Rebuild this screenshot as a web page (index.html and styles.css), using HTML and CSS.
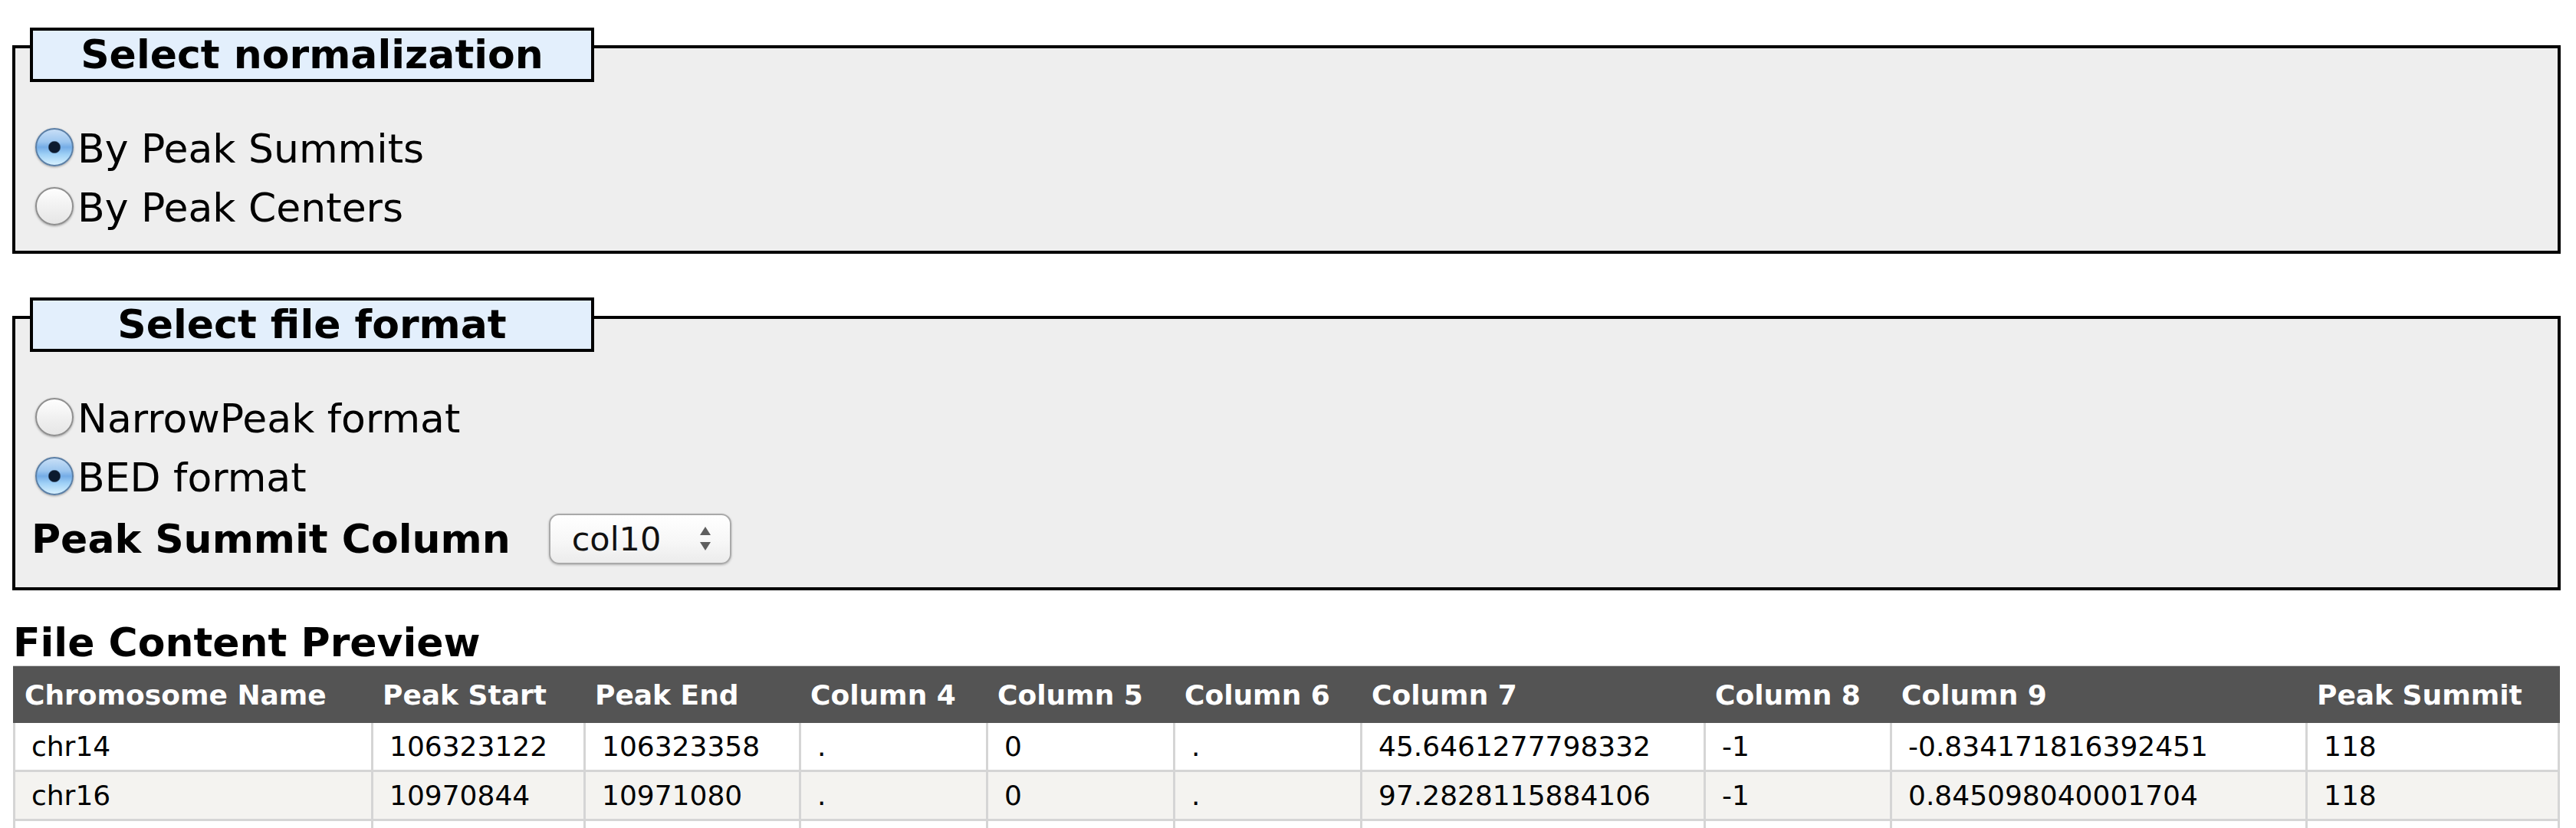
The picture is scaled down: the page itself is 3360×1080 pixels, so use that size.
FILE: index.html
```html
<!DOCTYPE html>
<html lang="en">
<head>
<meta charset="utf-8">
<title>Peak file options</title>
<link rel="stylesheet" href="styles.css">
</head>
<body>
<div class="page">
  <section class="group group-norm">
    <div class="group-title">Select normalization</div>
    <div class="options">
      <label class="option"><input class="radio" type="radio" name="norm" checked><span>By Peak Summits</span></label>
      <label class="option"><input class="radio" type="radio" name="norm"><span>By Peak Centers</span></label>
    </div>
  </section>

  <section class="group group-format">
    <div class="group-title">Select file format</div>
    <div class="options">
      <label class="option"><input class="radio" type="radio" name="fmt"><span>NarrowPeak format</span></label>
      <label class="option"><input class="radio" type="radio" name="fmt" checked><span>BED format</span></label>
      <div class="summit-row">
        <span class="summit-label">Peak Summit Column</span>
        <div class="select">
          <span class="select-value">col10</span>
          <svg class="select-arrows" width="16" height="34" viewBox="0 0 16 34"><polygon points="8,1 15,12 1,12" fill="#5e5e5e"/><polygon points="1,21 15,21 8,32" fill="#5e5e5e"/></svg>
        </div>
      </div>
    </div>
  </section>

  <h2 class="preview-title">File Content Preview</h2>
  <table class="preview">
    <colgroup>
      <col class="w1"><col class="w2"><col class="w3"><col class="w4"><col class="w5">
      <col class="w6"><col class="w7"><col class="w8"><col class="w9"><col class="w10">
    </colgroup>
    <thead>
      <tr>
        <th>Chromosome Name</th><th>Peak Start</th><th>Peak End</th><th>Column 4</th><th>Column 5</th>
        <th>Column 6</th><th>Column 7</th><th>Column 8</th><th>Column 9</th><th>Peak Summit</th>
      </tr>
    </thead>
    <tbody>
      <tr>
        <td>chr14</td><td>106323122</td><td>106323358</td><td>.</td><td>0</td>
        <td>.</td><td>45.6461277798332</td><td>-1</td><td>-0.834171816392451</td><td>118</td>
      </tr>
      <tr class="alt">
        <td>chr16</td><td>10970844</td><td>10971080</td><td>.</td><td>0</td>
        <td>.</td><td>97.2828115884106</td><td>-1</td><td>0.845098040001704</td><td>118</td>
      </tr>
      <tr>
        <td></td><td></td><td></td><td></td><td></td>
        <td></td><td></td><td></td><td></td><td></td>
      </tr>
    </tbody>
  </table>
</div>
</body>
</html>
```

FILE: styles.css
```css
html, body {
  margin: 0;
  padding: 0;
  background: #ffffff;
}

body {
  font-family: "DejaVu Sans", Verdana, sans-serif;
  color: #000;
}

.page {
  padding: 59px 20px 0 16px;
}

.group {
  border: 4px solid #000;
  background: #eeeeee;
  padding: 0 0 20px 21px;
}

.group-format {
  margin-top: 81px;
  padding-bottom: 25px;
}

.group-title {
  width: 728px;
  height: 63px;
  margin: -27px 0 0 -2px;
  border: 4px solid #000;
  background: #e3effc;
  font-weight: bold;
  font-size: 52px;
  line-height: 63px;
  text-align: center;
  box-sizing: content-box;
}

.group-format .group-title {
  margin-top: -28px;
}

.options {
  margin-top: 46px;
  display: flex;
  flex-direction: column;
}

.option {
  display: flex;
  align-items: center;
  height: 77px;
  font-size: 52px;
}

.option span {
  padding-top: 4px;
}

.radio {
  appearance: none;
  -webkit-appearance: none;
  width: 50px;
  height: 50px;
  margin: 0 5px 0 5px;
  border-radius: 50%;
  border: 2px solid #8f8f8f;
  box-sizing: border-box;
  background: linear-gradient(#fefefe 0%, #f1f1f1 50%, #e6e6e6 100%);
  box-shadow: 0 1px 3px rgba(0, 0, 0, 0.35);
  flex: none;
}

.radio:checked {
  border-color: #5b7fa6;
  background:
    radial-gradient(circle at 50% 50%, #0c1a2e 0, #0c1a2e 7px, rgba(12, 26, 46, 0) 8.5px),
    linear-gradient(#c7def6 0%, #9cc6ef 35%, #74ace6 50%, #9ed0f6 70%, #d6f0fe 100%);
}

.summit-row {
  display: flex;
  align-items: center;
  height: 76px;
  margin-top: 6px;
}

.summit-label {
  font-size: 52px;
  font-weight: bold;
}

.select {
  margin-left: 50px;
  width: 238px;
  height: 66px;
  box-sizing: border-box;
  border: 2px solid #a9a9a9;
  border-radius: 13px;
  background: linear-gradient(#ffffff 0%, #f7f7f7 55%, #ececec 100%);
  box-shadow: 0 1px 3px rgba(0, 0, 0, 0.25);
  display: flex;
  align-items: center;
  justify-content: space-between;
  padding: 0 24px 0 28px;
}

.select-value {
  font-size: 43px;
  color: #111;
}

.select-arrows {
  display: block;
}

.preview-title {
  margin: 38px 0 0 1px;
  font-size: 52px;
  font-weight: bold;
  line-height: 60px;
  height: 60px;
}

.preview {
  margin: 0 1px;
  width: 3322px;
  table-layout: fixed;
  border-collapse: separate;
  border-spacing: 0;
  font-size: 36px;
}

.w1 { width: 467px; }
.w2 { width: 277px; }
.w3 { width: 281px; }
.w4 { width: 244px; }
.w5 { width: 244px; }
.w6 { width: 244px; }
.w7 { width: 448px; }
.w8 { width: 243px; }
.w9 { width: 542px; }
.w10 { width: 332px; }

.preview th {
  background: #545454;
  color: #ffffff;
  font-weight: bold;
  text-align: left;
  height: 75px;
  padding: 0 0 0 15px;
  white-space: nowrap;
  border-top: 1px solid #cfcfcf;
  box-sizing: border-box;
}

.preview td {
  height: 61px;
  padding: 0 0 0 21px;
  border-left: 3px solid #d5d5d5;
  border-bottom: 3px solid #d5d5d5;
  white-space: nowrap;
  background: #ffffff;
}

.preview td:last-child {
  border-right: 3px solid #d5d5d5;
}

.preview tr.alt td {
  background: #f4f3f0;
}
```
